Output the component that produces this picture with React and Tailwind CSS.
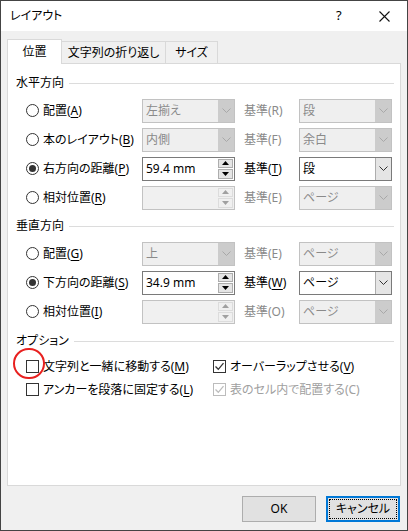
import React from 'react'

const U = ({ c }) => <span className="underline underline-offset-[2px]">{c}</span>

function Chevron({ color = '#606060' }) {
  return (
    <svg width="9" height="5" viewBox="0 0 9 5"><path d="M0.5 0.5 L4.5 4.5 L8.5 0.5" fill="none" stroke={color} strokeWidth="1" /></svg>
  )
}

function Combo({ text, disabled, w = 'w-[93px]' }) {
  if (disabled) return (
    <div className={`${w} h-[24px] flex border border-[#c2c2c2] bg-[#efefef]`}>
      <div className="flex-1 flex items-center pl-[3px] text-[#8a8a8a]">{text}</div>
      <div className="w-[16px] bg-[#cccccc] flex items-center justify-center"><Chevron color="#a8a8a8" /></div>
    </div>
  )
  return (
    <div className={`${w} h-[24px] flex border border-[#7a7a7a] bg-white`}>
      <div className="flex-1 flex items-center pl-[3px] text-black">{text}</div>
      <div className="w-[16px] border-l border-[#adadad] bg-[#e5e5e5] flex items-center justify-center"><Chevron color="#333" /></div>
    </div>
  )
}

function Tri({ up, color }) {
  return (
    <svg width="7" height="4" viewBox="0 0 7 4">
      <path d={up ? 'M0 4 L3.5 0 L7 4 Z' : 'M0 0 L3.5 4 L7 0 Z'} fill={color} />
    </svg>
  )
}

function Spin({ text, disabled }) {
  const bc = disabled ? 'border-[#c2c2c2]' : 'border-[#7a7a7a]'
  const tc = disabled ? '#a0a0a0' : '#000'
  const btn = disabled ? 'border-[#dcdcdc] bg-[#f0f0f0]' : 'border-[#adadad] bg-[#e5e5e5]'
  return (
    <div className={`w-[93px] h-[24px] flex border ${bc} ${disabled ? 'bg-[#f0f0f0]' : 'bg-white'}`}>
      <div className="flex-1 flex items-center pl-[3px] text-black">{text}</div>
      <div className="w-[15px] my-[1px] mr-[1px] flex flex-col gap-px">
        <div className={`flex-1 flex items-center justify-center border ${btn}`}><Tri up color={tc} /></div>
        <div className={`flex-1 flex items-center justify-center border ${btn}`}><Tri color={tc} /></div>
      </div>
    </div>
  )
}

function Radio({ on }) {
  return (
    <div className="w-[13px] h-[13px] rounded-full border border-[#333] bg-white flex items-center justify-center">
      {on && <div className="w-[7px] h-[7px] rounded-full bg-[#333]" />}
    </div>
  )
}

function Check({ on, disabled }) {
  const c = disabled ? '#bcbcbc' : '#333'
  return (
    <div className={`w-[13px] h-[13px] border bg-white flex items-center justify-center ${disabled ? 'border-[#bcbcbc]' : 'border-[#333]'}`}>
      {on && <svg width="11" height="11" viewBox="0 0 11 11"><path d="M1.5 5.5 L4.3 8.3 L9.5 2.2" fill="none" stroke={c} strokeWidth="1.3" /></svg>}
    </div>
  )
}

function Heading({ text }) {
  return (
    <div className="h-[20px] flex items-center pl-[8px] pr-[6px]">
      <span>{text}</span>
      <div className="flex-1 h-px bg-[#dcdcdc] ml-[5px]" />
    </div>
  )
}

function Row({ on, label, ctrl, base, baseOn, combo }) {
  return (
    <div className="h-[29px] flex items-center pl-[18px]">
      <div className="w-[116px] flex items-center gap-[4px]">
        <Radio on={on} />
        <span>{label}</span>
      </div>
      {ctrl}
      <div className={`w-[55px] ml-[9px] ${baseOn ? 'text-black' : 'text-[#8a8a8a]'}`}>{base}</div>
      {combo}
    </div>
  )
}

export default function App() {
  return (
    <div className="w-[408px] h-[531px] bg-[#f0f0f0] border border-[#444] flex flex-col text-[12px] text-black leading-none font-['Noto_Sans','Noto_Sans_CJK_JP',sans-serif] [font-feature-settings:'palt']">
      <div className="h-[30px] bg-white flex items-center pl-[9px] relative">
        <span className="text-[12px]">レイアウト</span>
        <span className="absolute left-[335px] top-[8px] text-[13px]">?</span>
        <svg className="absolute left-[378px] top-[10px]" width="11" height="11" viewBox="0 0 11 11">
          <path d="M0.5 0.5 L10.5 10.5 M10.5 0.5 L0.5 10.5" stroke="#111" strokeWidth="1.1" />
        </svg>
      </div>
      <div className="px-[6px] pt-[8px]">
        <div className="flex items-end h-[24px]">
          <div className="w-[55px] h-[25px] mb-[-1px] relative z-10 bg-white border border-b-0 border-[#d9d9d9] flex items-center justify-center">位置</div>
          <div className="w-[104px] h-[22px] border border-b-0 border-l-0 border-[#d9d9d9] flex items-center justify-center">文字列の折り返し</div>
          <div className="w-[52px] h-[22px] border border-b-0 border-l-0 border-[#d9d9d9] flex items-center justify-center">サイズ</div>
        </div>
        <div className="h-[423px] bg-white border border-[#d9d9d9] pt-[9px]">
          <Heading text="水平方向" />
          <div className="mt-[3px]">
            <Row label={<>配置(<U c="A" />)</>} ctrl={<Combo disabled text="左揃え" />} base="基準(R)" combo={<Combo disabled text="段" />} />
            <Row label={<>本のレイアウト(<U c="B" />)</>} ctrl={<Combo disabled text="内側" />} base="基準(F)" combo={<Combo disabled text="余白" />} />
            <Row on label={<>右方向の距離(<U c="P" />)</>} ctrl={<Spin text="59.4 mm" />} baseOn base={<>基準(<U c="T" />)</>} combo={<Combo text="段" />} />
            <Row label={<>相対位置(<U c="R" />)</>} ctrl={<Spin disabled text="" />} base="基準(E)" combo={<Combo disabled text="ページ" />} />
          </div>
          <div className="mt-[4px]">
            <Heading text="垂直方向" />
          </div>
          <div className="mt-[3px]">
            <Row label={<>配置(<U c="G" />)</>} ctrl={<Combo disabled text="上" />} base="基準(E)" combo={<Combo disabled text="ページ" />} />
            <Row on label={<>下方向の距離(<U c="S" />)</>} ctrl={<Spin text="34.9 mm" />} baseOn base={<>基準(<U c="W" />)</>} combo={<Combo text="ページ" />} />
            <Row label={<>相対位置(<U c="I" />)</>} ctrl={<Spin disabled text="" />} base="基準(O)" combo={<Combo disabled text="ページ" />} />
          </div>
          <div className="mt-[5px]">
            <Heading text="オプション" />
          </div>
          <div className="mt-[4px] pl-[18px] relative">
            <div className="h-[23px] flex items-center">
              <div className="w-[187px] flex items-center gap-[4px]">
                <Check />
                <span>文字列と一緒に移動する(<U c="M" />)</span>
              </div>
              <div className="flex items-center gap-[4px]">
                <Check on />
                <span>オーバーラップさせる(<U c="V" />)</span>
              </div>
            </div>
            <div className="h-[23px] flex items-center">
              <div className="w-[187px] flex items-center gap-[4px]">
                <Check />
                <span>アンカーを段落に固定する(<U c="L" />)</span>
              </div>
              <div className="flex items-center gap-[4px] text-[#a0a0a0]">
                <Check on disabled />
                <span>表のセル内で配置する(C)</span>
              </div>
            </div>
            <div className="absolute left-[5px] top-[-7px] w-[32px] h-[31px] rounded-full border-2 border-[#e8201f]" />
          </div>
        </div>
        <div className="flex justify-end gap-[10px] mt-[10px] pr-px">
          <button className="w-[74px] h-[26px] bg-[#e1e1e1] border border-[#adadad] flex items-center justify-center">OK</button>
          <button className="w-[74px] h-[26px] bg-[#e1e1e1] border-2 border-[#0078d7] p-px">
            <div className="w-full h-full border border-dotted border-black flex items-center justify-center">キャンセル</div>
          </button>
        </div>
      </div>
    </div>
  )
}
